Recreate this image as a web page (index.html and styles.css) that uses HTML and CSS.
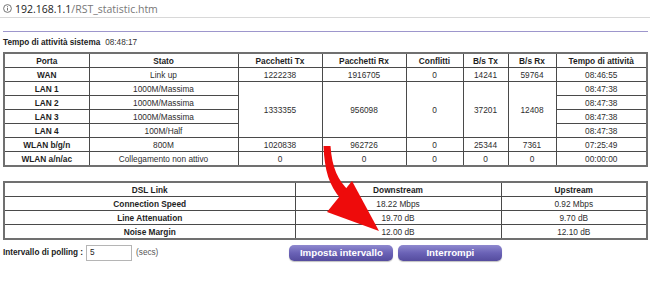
FILE: index.html
```html
<!DOCTYPE html>
<html>
<head>
<meta charset="utf-8">
<link rel="stylesheet" href="styles.css">
</head>
<body>
<div class="addr">
  <svg class="info" width="9" height="9" viewBox="0 0 9 9"><circle cx="4.5" cy="4.5" r="3.9" fill="none" stroke="#666" stroke-width="0.9"/><rect x="4.05" y="3.8" width="0.9" height="2.8" fill="#666"/><rect x="4.05" y="2.2" width="0.9" height="0.9" fill="#666"/></svg>
  <span class="host">192.168.1.1</span><span class="path">/RST_statistic.htm</span>
</div>
<div class="page">
  <div class="rule"></div>
  <div class="uptime"><b>Tempo di attività sistema</b><span class="time">08:48:17</span></div>
  <table class="stats">
    <colgroup>
      <col style="width:85px"><col style="width:149px"><col style="width:84px"><col style="width:84px"><col style="width:57px"><col style="width:45px"><col style="width:48px"><col>
    </colgroup>
    <tr class="head"><th>Porta</th><th>Stato</th><th>Pacchetti Tx</th><th>Pacchetti Rx</th><th>Conflitti</th><th>B/s Tx</th><th>B/s Rx</th><th>Tempo di attività</th></tr>
    <tr><th>WAN</th><td>Link up</td><td>1222238</td><td>1916705</td><td>0</td><td>14241</td><td>59764</td><td>08:46:55</td></tr>
    <tr><th>LAN 1</th><td>1000M/Massima</td><td rowspan="4">1333355</td><td rowspan="4">956098</td><td rowspan="4">0</td><td rowspan="4">37201</td><td rowspan="4">12408</td><td>08:47:38</td></tr>
    <tr><th>LAN 2</th><td>1000M/Massima</td><td>08:47:38</td></tr>
    <tr><th>LAN 3</th><td>1000M/Massima</td><td>08:47:38</td></tr>
    <tr><th>LAN 4</th><td>100M/Half</td><td>08:47:38</td></tr>
    <tr><th>WLAN b/g/n</th><td>800M</td><td>1020838</td><td>962726</td><td>0</td><td>25344</td><td>7361</td><td>07:25:49</td></tr>
    <tr><th>WLAN a/n/ac</th><td>Collegamento non attivo</td><td>0</td><td>0</td><td>0</td><td>0</td><td>0</td><td>00:00:00</td></tr>
  </table>
  <table class="dsl">
    <colgroup><col style="width:291px"><col style="width:206px"><col></colgroup>
    <tr class="head"><th>DSL Link</th><th>Downstream</th><th>Upstream</th></tr>
    <tr><th>Connection Speed</th><td>18.22 Mbps</td><td>0.92 Mbps</td></tr>
    <tr><th>Line Attenuation</th><td>19.70 dB</td><td>9.70 dB</td></tr>
    <tr><th>Noise Margin</th><td>12.00 dB</td><td>12.10 dB</td></tr>
  </table>
  <div class="poll">
    <b class="plabel">Intervallo di polling :</b>
    <input class="pinput" type="text" value="5">
    <span class="secs">(secs)</span>
    <button class="btn b1">Imposta intervallo</button>
    <button class="btn">Interrompi</button>
  </div>
</div>
<svg class="arrow" width="650" height="286" viewBox="0 0 650 286">
  <path d="M323.5,146 C324.5,170 329,186 341,199 L349,191 C338,180 332,168 330.5,146 Z" fill="#ee0b0b"/>
  <polygon points="327,212 352,181 379,231" fill="#ee0b0b"/>
</svg>
</body>
</html>
```
FILE: styles.css
```css
html, body { margin: 0; padding: 0; background: #fff; }
body { font-family: "Liberation Sans", Arial, sans-serif; width: 650px; height: 286px; overflow: hidden; position: relative; }

.addr { height: 18px; border-bottom: 1px solid #d8d8d8; display: flex; align-items: center; padding-left: 3px; font-size: 10.5px; box-sizing: border-box; font-family: "Open Sans", "Liberation Sans", sans-serif; }
.info { margin-right: 3px; }
.host { color: #222; }
.path { color: #777; }

.page { padding: 0 2px 0 3px; }
.rule { height: 1px; background: #9d96cc; margin-top: 13px; }
.uptime { font-size: 8.2px; color: #222; height: 19px; line-height: 19px; margin-top: 1px; }
.uptime .time { margin-left: 5px; font-weight: normal; color: #333; }

table { border-collapse: collapse; table-layout: fixed; width: 645px; font-size: 8.3px; color: #2e2e2e; border: 2px solid #707070; }
th, td { border: 1px solid #4a4a4a; padding: 0; text-align: center; height: 13px; line-height: 12px; white-space: nowrap; }
th { font-weight: bold; color: #1e1e1e; }

.dsl { margin-top: 14px; }

.poll { display: flex; align-items: center; margin-top: 4px; height: 17px; font-size: 8.2px; }
.plabel { color: #222; }
.pinput { width: 46px; height: 16px; box-sizing: border-box; border: 1px solid #b5b5b5; margin: 0 0 0 3px; padding: 0 3px; font: 8.2px "Liberation Sans", Arial, sans-serif; color: #222; }
.secs { color: #555; margin-left: 4px; }
.btn { height: 16px; border: none; border-radius: 5px; background: linear-gradient(#8f89cf, #6a62b6 50%, #554c9e); color: #fff; font: bold 9.7px "Liberation Sans", Arial, sans-serif; padding: 0; width: 104px; margin-left: 5px; box-shadow: 0 1px 1px rgba(0,0,0,0.25); }
.b1 { margin-left: 131px; }

.arrow { position: absolute; left: 0; top: 0; pointer-events: none; }
```
